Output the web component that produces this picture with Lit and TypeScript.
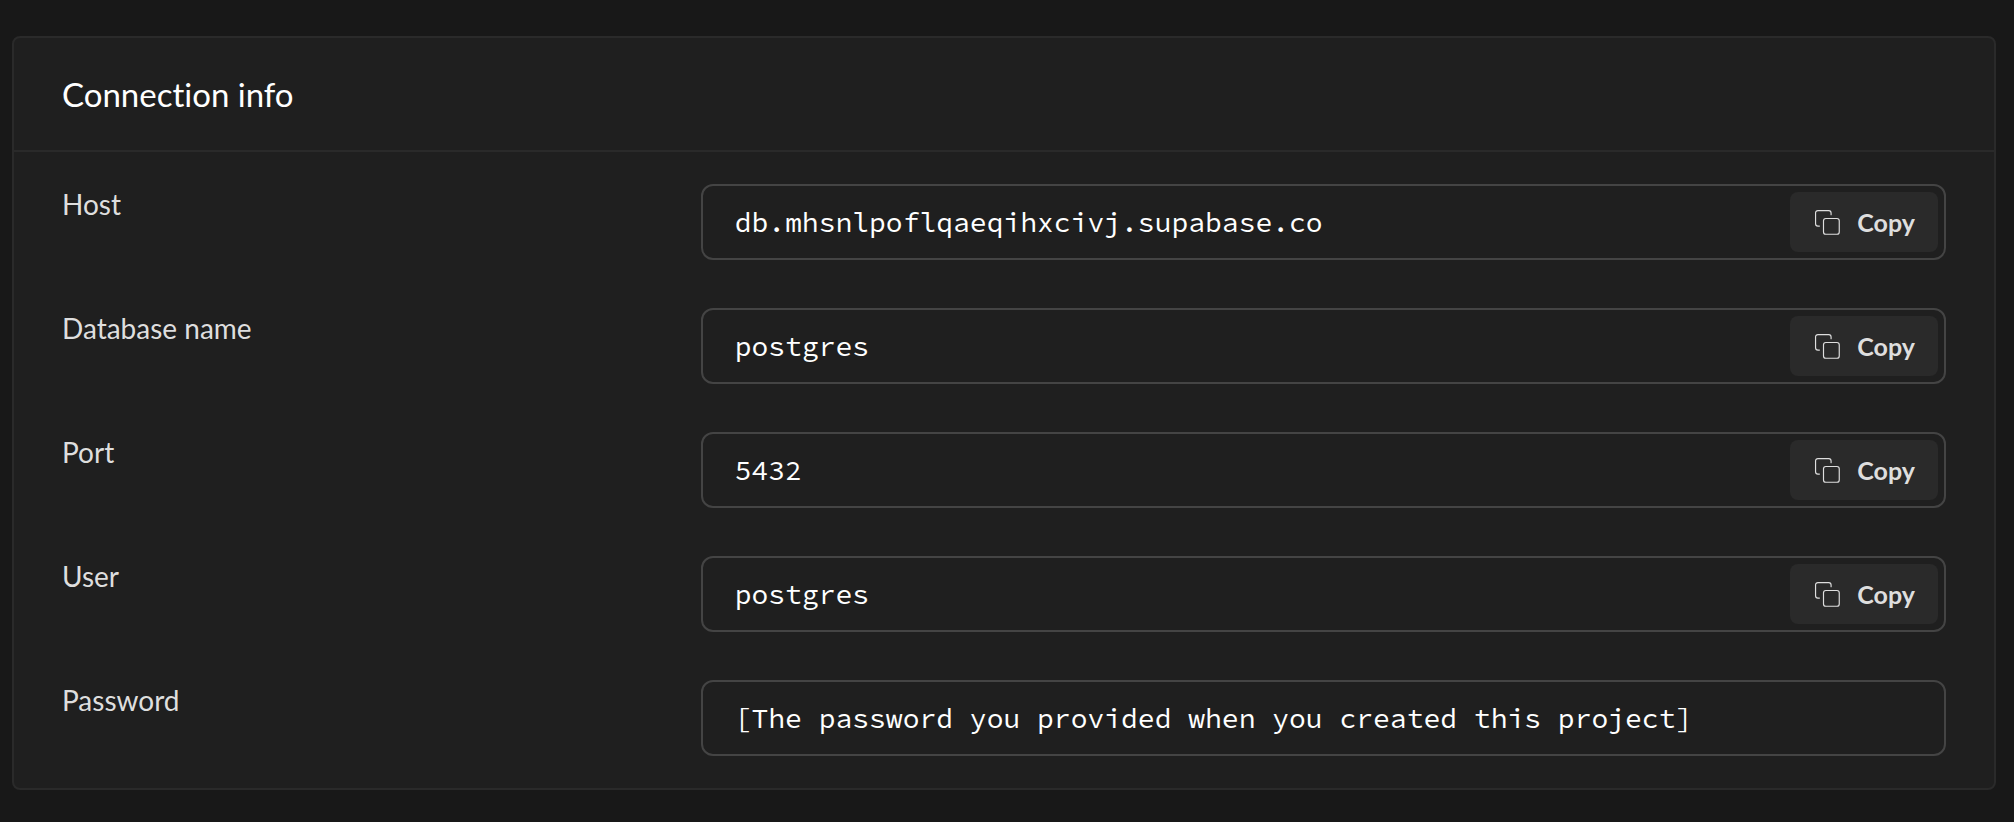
import { LitElement, html, css, svg, nothing } from "lit";
import { customElement, property } from "lit/decorators.js";

interface Field {
  id: string;
  label: string;
  value: string;
  copyable: boolean;
}

const FIELDS: Field[] = [
  { id: "host", label: "Host", value: "db.mhsnlpoflqaeqihxcivj.supabase.co", copyable: true },
  { id: "database", label: "Database name", value: "postgres", copyable: true },
  { id: "port", label: "Port", value: "5432", copyable: true },
  { id: "user", label: "User", value: "postgres", copyable: true },
  {
    id: "password",
    label: "Password",
    value: "[The password you provided when you created this project]",
    copyable: false,
  },
];

const copyShapes = svg`
  <rect x="9" y="9" width="13.5" height="13.5" rx="2"></rect>
  <path d="M5.5 15.5H4.2a2 2 0 0 1-2-2V4.2a2 2 0 0 1 2-2h9.3a2 2 0 0 1 2 2v1.6"></path>
`;

@customElement("info-field")
export class InfoField extends LitElement {
  @property({ attribute: false }) field!: Field;

  static styles = css`
    :host {
      display: block;
    }
    .row {
      display: grid;
      grid-template-columns: repeat(12, minmax(0, 1fr));
      column-gap: 32px;
      align-items: start;
    }
    .label {
      grid-column: span 4;
      color: #dedede;
      font-size: 28px;
      line-height: 40px;
    }
    .box {
      grid-column: span 8;
      display: flex;
      align-items: center;
      box-sizing: border-box;
      height: 76px;
      padding-right: 6px;
      border: 2px solid #444444;
      border-radius: 12px;
      background: #1f1f1f;
    }
    .value {
      flex: 1;
      min-width: 0;
      height: 100%;
      box-sizing: border-box;
      padding: 0 32px;
      border: 0;
      outline: 0;
      background: transparent;
      color: #ffffff;
      font-family: "Source Code Pro", "Liberation Mono", monospace;
      font-size: 28px;
      line-height: 40px;
    }
    .copy {
      display: flex;
      align-items: center;
      gap: 16px;
      height: 60px;
      padding: 0 23px;
      border: 0;
      border-radius: 8px;
      background: #2a2a2a;
      color: #dedede;
      font-family: inherit;
      font-size: 25px;
      font-weight: 700;
      line-height: 32px;
      cursor: pointer;
    }
    .icon {
      width: 28px;
      height: 28px;
      fill: none;
      stroke: currentColor;
      stroke-width: 1;
      stroke-linecap: round;
      stroke-linejoin: round;
    }
  `;

  private copy() {
    navigator.clipboard?.writeText(this.field.value);
  }

  render() {
    const { id, label, value, copyable } = this.field;
    return html`
      <div class="row">
        <label class="label" for=${id}>${label}</label>
        <div class="box">
          <input class="value" id=${id} type="text" readonly .value=${value} />
          ${copyable
            ? html`<button class="copy" type="button" @click=${this.copy}>
                <svg class="icon" viewBox="0 0 24 24" aria-hidden="true">${copyShapes}</svg>
                <span>Copy</span>
              </button>`
            : nothing}
        </div>
      </div>
    `;
  }
}

@customElement("app-root")
export class AppRoot extends LitElement {
  static styles = css`
    :host {
      display: block;
      box-sizing: border-box;
      min-height: 100vh;
      padding: 36px 18px 32px 12px;
      background: #181818;
      font-family: Lato, "Liberation Sans", sans-serif;
      font-variant-ligatures: none;
    }
    .panel {
      border: 2px solid #2a2a2a;
      border-radius: 8px;
      background: #1f1f1f;
      overflow: hidden;
    }
    .header {
      padding: 32px 48px;
      border-bottom: 2px solid #2a2a2a;
    }
    .title {
      margin: 0;
      color: #ffffff;
      font-size: 33px;
      font-weight: 400;
      line-height: 48px;
    }
    .fields {
      display: flex;
      flex-direction: column;
      gap: 48px;
      padding: 32px 48px;
    }
  `;

  render() {
    return html`
      <section class="panel">
        <header class="header"><h2 class="title">Connection info</h2></header>
        <div class="fields">
          ${FIELDS.map((field) => html`<info-field .field=${field}></info-field>`)}
        </div>
      </section>
    `;
  }
}
